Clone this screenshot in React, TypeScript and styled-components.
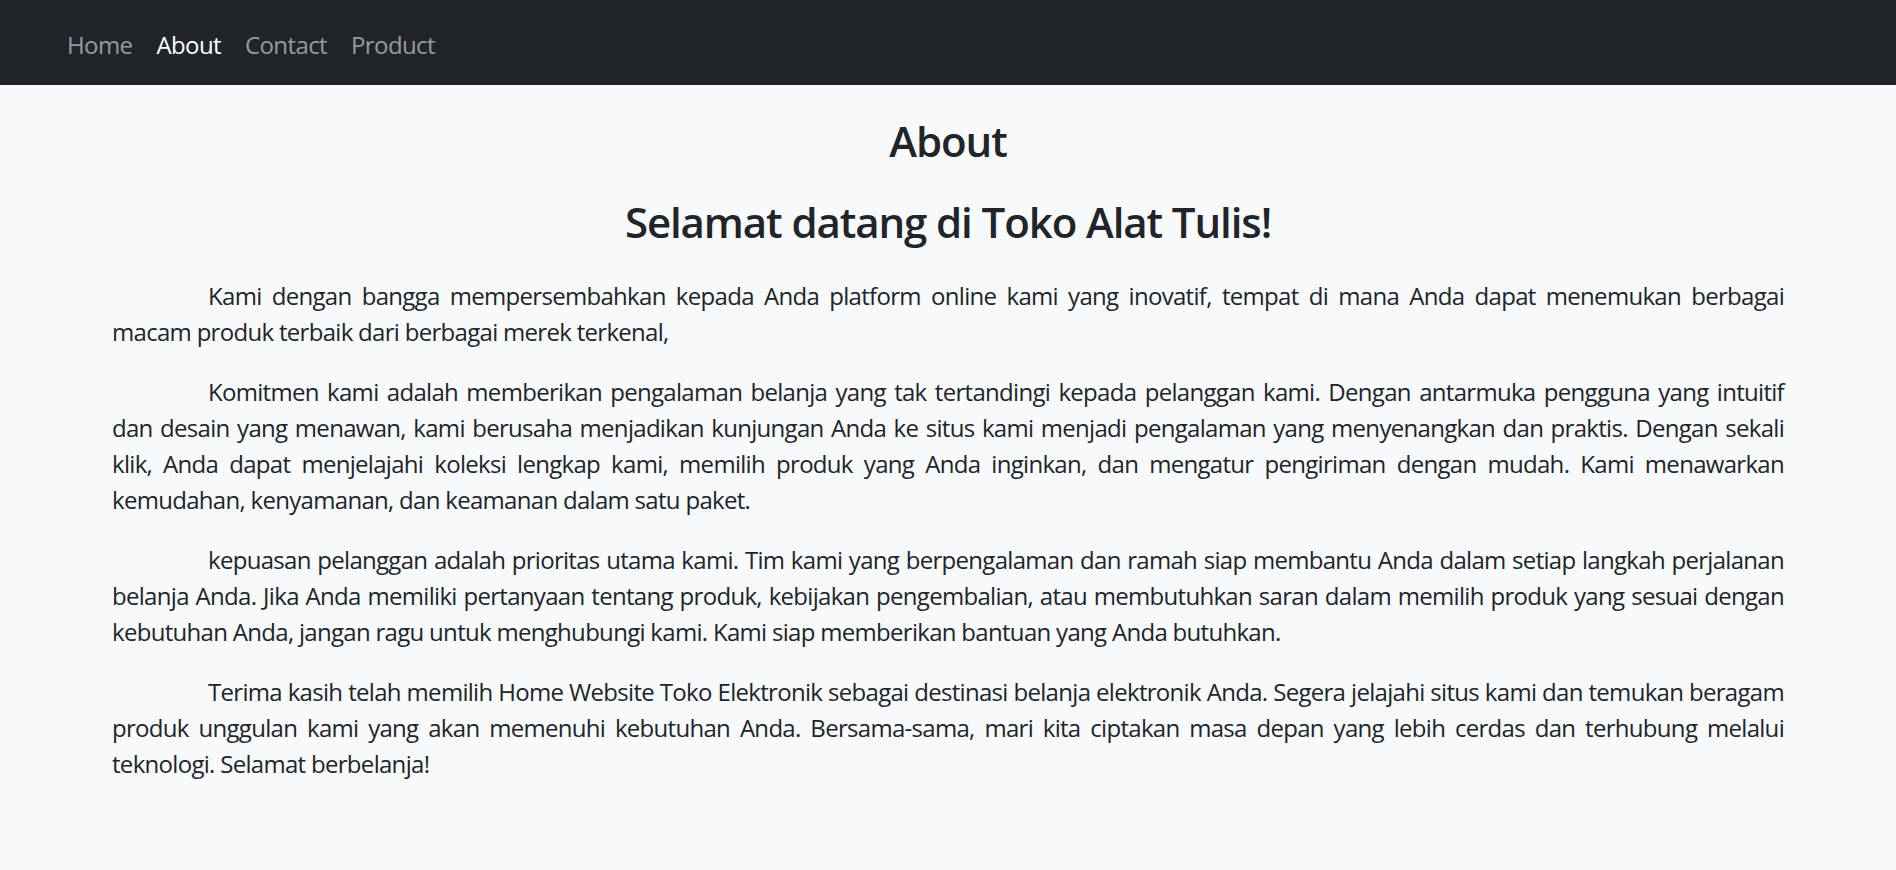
import React from "react";
import styled, { createGlobalStyle } from "styled-components";

const Global = createGlobalStyle`
  html, body { margin: 0; padding: 0; }
  body {
    background: #f8f9fa;
    color: #212529;
    font-family: "Open Sans", "Noto Sans", sans-serif;
    font-size: 24px;
    line-height: 1.5;
  }
  * { box-sizing: border-box; }
`;

const Navbar = styled.nav`
  background: #212529;
  height: 85px;
  padding: 27px 0 22px 55px;
  display: flex;
  align-items: flex-start;
`;

const NavList = styled.ul`
  list-style: none;
  margin: 0;
  padding: 0;
  display: flex;
`;

const NavLink = styled.a<{ $active?: boolean }>`
  display: block;
  padding: 0 12px;
  line-height: 36px;
  font-size: 24px;
  letter-spacing: -0.6px;
  text-decoration: none;
  color: ${(p) => (p.$active ? "#ffffff" : "rgba(255,255,255,0.55)")};
  cursor: pointer;
`;

const Main = styled.main`
  padding: 31px 112px 40px;
`;

const Heading = styled.h2<{ $gap: number }>`
  margin: 0 0 ${(p) => p.$gap}px;
  text-align: center;
  font-size: 42px;
  font-weight: 600;
  line-height: 1.2;
  letter-spacing: -1.1px;
  color: #212529;
`;

const Para = styled.p`
  margin: 0 0 24px;
  text-align: justify;
  text-indent: 96px;
  line-height: 36px;
  letter-spacing: -0.7px;
`;

const links = ["Home", "About", "Contact", "Product"];

const paragraphs = [
  "Kami dengan bangga mempersembahkan kepada Anda platform online kami yang inovatif, tempat di mana Anda dapat menemukan berbagai macam produk terbaik dari berbagai merek terkenal,",
  "Komitmen kami adalah memberikan pengalaman belanja yang tak tertandingi kepada pelanggan kami. Dengan antarmuka pengguna yang intuitif dan desain yang menawan, kami berusaha menjadikan kunjungan Anda ke situs kami menjadi pengalaman yang menyenangkan dan praktis. Dengan sekali klik, Anda dapat menjelajahi koleksi lengkap kami, memilih produk yang Anda inginkan, dan mengatur pengiriman dengan mudah. Kami menawarkan kemudahan, kenyamanan, dan keamanan dalam satu paket.",
  "kepuasan pelanggan adalah prioritas utama kami. Tim kami yang berpengalaman dan ramah siap membantu Anda dalam setiap langkah perjalanan belanja Anda. Jika Anda memiliki pertanyaan tentang produk, kebijakan pengembalian, atau membutuhkan saran dalam memilih produk yang sesuai dengan kebutuhan Anda, jangan ragu untuk menghubungi kami. Kami siap memberikan bantuan yang Anda butuhkan.",
  "Terima kasih telah memilih Home Website Toko Elektronik sebagai destinasi belanja elektronik Anda. Segera jelajahi situs kami dan temukan beragam produk unggulan kami yang akan memenuhi kebutuhan Anda. Bersama-sama, mari kita ciptakan masa depan yang lebih cerdas dan terhubung melalui teknologi. Selamat berbelanja!",
];

export default function App() {
  return (
    <>
      <Global />
      <Navbar>
        <NavList>
          {links.map((l) => (
            <li key={l}>
              <NavLink $active={l === "About"}>{l}</NavLink>
            </li>
          ))}
        </NavList>
      </Navbar>
      <Main>
        <Heading $gap={31}>About</Heading>
        <Heading as="h3" $gap={30}>
          Selamat datang di Toko Alat Tulis!
        </Heading>
        {paragraphs.map((p, i) => (
          <Para key={i}>{p}</Para>
        ))}
      </Main>
    </>
  );
}
